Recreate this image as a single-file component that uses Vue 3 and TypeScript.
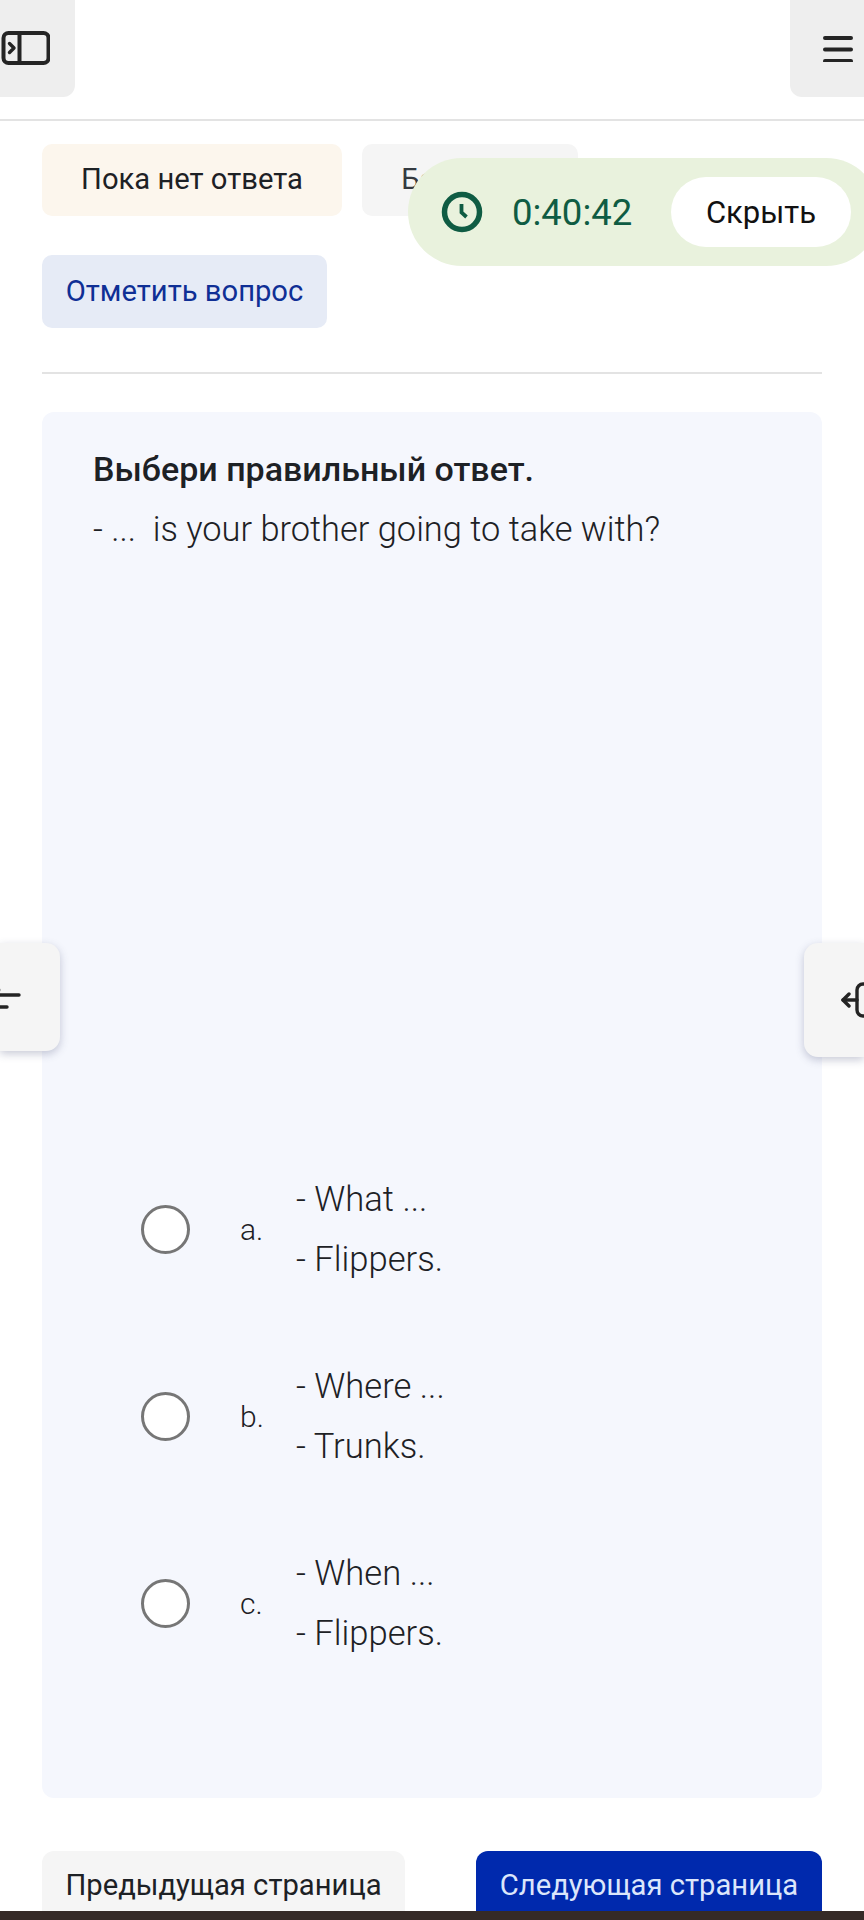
<script setup lang="ts">
interface Option {
  letter: string
  lines: string[]
}

const options: Option[] = [
  { letter: 'a.', lines: ['- What ...', '- Flippers.'] },
  { letter: 'b.', lines: ['- Where ...', '- Trunks.'] },
  { letter: 'c.', lines: ['- When ...', '- Flippers.'] }
]
</script>

<template>
  <div class="page">
    <header class="topbar">
      <button class="top-btn left">
        <svg width="50" height="36" viewBox="0 0 50 36" fill="none" stroke="#242424" stroke-width="4">
          <rect x="3.500" y="2" width="45" height="30" rx="5" />
          <path d="M19.500 2v30" />
          <path d="M9.500 12.500l4.500 4.500L9.500 21.500" stroke-width="3.400" stroke-linecap="round" stroke-linejoin="round" />
        </svg>
      </button>
      <button class="top-btn right">
        <svg width="30" height="26" viewBox="0 0 30 26" fill="none" stroke="#242424" stroke-width="4" stroke-linecap="round">
          <path d="M2 2h26M2 13.500h26M2 25h26" />
        </svg>
      </button>
    </header>

    <main class="content">
      <div class="status-row">
        <div class="status answer">Пока нет ответа</div>
        <div class="status score">Балл: 1,00</div>
      </div>
      <button class="flag">Отметить вопрос</button>
      <hr class="divider" />

      <section class="card">
        <h2 class="title">Выбери правильный ответ.</h2>
        <p class="question">- ...&nbsp; is your brother going to take with?</p>

        <div class="options">
          <label v-for="o in options" :key="o.letter" class="option">
            <span class="radio"></span>
            <span class="letter">{{ o.letter }}</span>
            <span class="lines">
              <span v-for="l in o.lines" :key="l">{{ l }}</span>
            </span>
          </label>
        </div>
      </section>

      <nav class="pager">
        <button class="page-btn prev">Предыдущая страница</button>
        <button class="page-btn next">Следующая страница</button>
      </nav>
    </main>

    <div class="timer">
      <svg class="clock" width="42" height="42" viewBox="0 0 42 42" fill="none" stroke="#0f5c43">
        <circle cx="21" cy="21" r="17.500" stroke-width="5.500" />
        <path d="M20.500 13v8.500l5 4.500" stroke-width="3.800" />
      </svg>
      <span class="time">0:40:42</span>
      <button class="hide">Скрыть</button>
    </div>

    <div class="side-tab side-left">
      <svg width="22" height="26" viewBox="0 0 22 26" fill="none" stroke="#242424" stroke-width="3.400" stroke-linecap="round">
        <path d="M-2 11h21M-2 23h9" />
        <path d="M-4 3l3 3" stroke="#9a9a9a" />
      </svg>
    </div>
    <div class="side-tab side-right">
      <svg width="32" height="38" viewBox="0 0 32 38" fill="none" stroke="#242424" stroke-width="3.400" stroke-linecap="round" stroke-linejoin="round">
        <path d="M2 19h14" />
        <path d="M8 13l-6 6 6 6" />
        <path d="M34 3h-12a6 6 0 0 0-6 6v20a6 6 0 0 0 6 6h12" />
      </svg>
    </div>

    <div class="bottom-bar"></div>
  </div>
</template>

<style>
html,
body {
  margin: 0;
  background: #fff;
}
</style>

<style scoped>
.page {
  position: relative;
  width: 864px;
  height: 1920px;
  overflow: hidden;
  background: #fff;
  color: #1d2125;
  font-family: Roboto, "Liberation Sans", sans-serif;
}

button {
  border: none;
  font-family: inherit;
  cursor: pointer;
}

.topbar {
  display: flex;
  justify-content: space-between;
  height: 119px;
  border-bottom: 2px solid #e3e3e3;
}

.top-btn {
  display: flex;
  align-items: center;
  box-sizing: border-box;
  height: 97px;
  padding: 0;
  background: #eeeeee;
}

.top-btn svg {
  flex: none;
}

.top-btn.left {
  width: 75px;
  padding-left: 0;
  border-radius: 0 0 12px 0;
}

.top-btn.right {
  width: 74px;
  padding-left: 33px;
  border-radius: 0 0 0 12px;
}

.content {
  padding: 23px 42px 0;
}

.status-row {
  display: flex;
  gap: 20px;
}

.status {
  display: flex;
  align-items: center;
  justify-content: center;
  box-sizing: border-box;
  height: 72px;
  padding-bottom: 2px;
  border-radius: 10px;
  font-size: 29.200px;
}

.answer {
  width: 300px;
  background: #fcf6ed;
}

.score {
  width: 216px;
  background: #f5f5f5;
  color: #343a40;
}

.flag {
  display: block;
  width: 285px;
  height: 73px;
  margin-top: 39px;
  padding-bottom: 3px;
  border-radius: 10px;
  background: #e6ebf6;
  color: #0f2f95;
  font-size: 29.200px;
}

.divider {
  height: 2px;
  margin: 44px 0 38px;
  border: none;
  background: #e3e3e3;
}

.card {
  box-sizing: border-box;
  height: 1386px;
  padding: 37px 51px 0;
  border-radius: 12px;
  background: #f5f7fd;
}

.title {
  margin: 0;
  font-size: 34px;
  font-weight: 500;
  line-height: 40px;
}

.question {
  margin: 20px 0 0;
  font-size: 34.400px;
  line-height: 40px;
  font-weight: 300;
}

.options {
  display: flex;
  flex-direction: column;
  gap: 67px;
  margin-top: 620px;
  padding-left: 48px;
}

.option {
  display: flex;
  align-items: center;
  height: 120px;
  font-size: 34.600px;
  font-weight: 300;
}

.radio {
  box-sizing: border-box;
  flex: none;
  width: 49px;
  height: 49px;
  border: 3px solid #767676;
  border-radius: 50%;
  background: #fff;
}

.letter {
  width: 56px;
  margin-left: 50px;
  font-size: 30px;
}

.lines {
  display: flex;
  flex-direction: column;
  gap: 20px;
  line-height: 40px;
}

.pager {
  display: flex;
  justify-content: space-between;
  margin-top: 53px;
}

.page-btn {
  height: 72px;
  padding-bottom: 5px;
  border-radius: 12px;
  font-size: 29.200px;
}

.prev {
  width: 363px;
  background: #f5f5f5;
  color: #1d2125;
}

.next {
  width: 346px;
  background: #0029ad;
  color: #dce6fb;
}

.timer {
  position: absolute;
  top: 158px;
  left: 408px;
  display: flex;
  align-items: center;
  box-sizing: border-box;
  width: 472px;
  height: 108px;
  padding-left: 33px;
  border-radius: 54px;
  background: #e9f2dd;
}

.clock {
  flex: none;
}

.time {
  width: 159px;
  margin-left: 29px;
  color: #0f5c43;
  font-size: 36.500px;
}

.hide {
  flex: none;
  width: 180px;
  height: 70px;
  padding: 0;
  border-radius: 35px;
  background: #fff;
  color: #111;
  font-size: 31px;
}

.side-tab {
  position: absolute;
  display: flex;
  align-items: center;
  box-sizing: border-box;
  background: #f5f5f5;
  box-shadow: 0 3px 8px rgba(60, 70, 110, 0.28);
}

.side-left {
  top: 943px;
  left: 0;
  width: 60px;
  height: 108px;
  border-radius: 0 14px 14px 0;
}

.side-right {
  top: 943px;
  right: 0;
  width: 60px;
  height: 114px;
  padding-left: 37px;
  border-radius: 14px 0 0 14px;
}

.side-right svg {
  flex: none;
}

.bottom-bar {
  position: absolute;
  right: 0;
  bottom: 0;
  left: 0;
  height: 9px;
  background: #352a27;
}
</style>
